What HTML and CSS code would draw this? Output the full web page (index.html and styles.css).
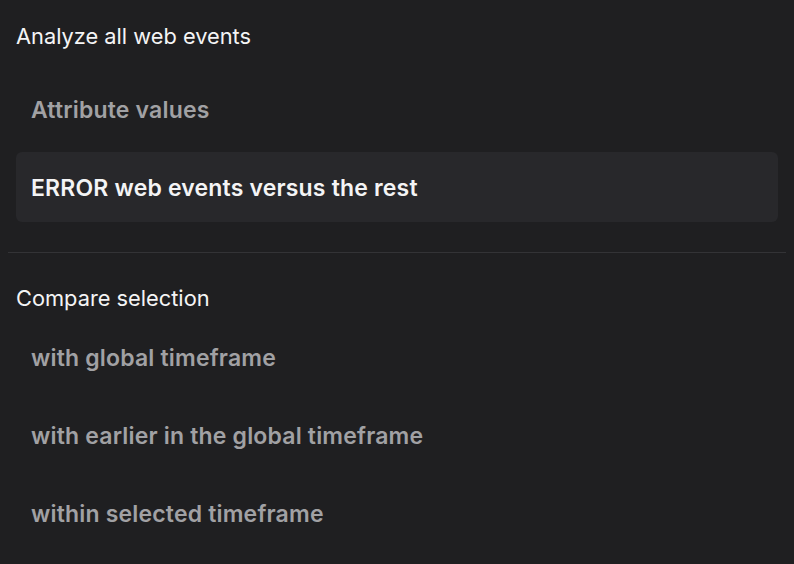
FILE: index.html
```html
<!DOCTYPE html>
<html lang="en">
<head>
<meta charset="UTF-8" />
<meta name="viewport" content="width=device-width, initial-scale=1" />
<title>Analyze menu</title>
<link rel="stylesheet" href="styles.css">
</head>
<body>
  <div class="menu">
    <section class="group group-first">
      <h3 class="group-title">Analyze all web events</h3>
      <ul class="options">
        <li class="option">Attribute values</li>
        <li class="option active">ERROR web events versus the rest</li>
      </ul>
    </section>

    <hr class="divider" />

    <section class="group">
      <h3 class="group-title">Compare selection</h3>
      <ul class="options">
        <li class="option">with global timeframe</li>
        <li class="option">with earlier in the global timeframe</li>
        <li class="option">within selected timeframe</li>
      </ul>
    </section>
  </div>
</body>
</html>
```

FILE: styles.css
```css
* {
  margin: 0;
  padding: 0;
  box-sizing: border-box;
}

body {
  background-color: #1f1f21;
  color: #f4f4f5;
  font-family: Inter, "Noto Sans", sans-serif;
  height: 100vh;
  overflow: hidden;
}

.menu {
  padding: 0 8px;
}

.group {
  padding: 0 8px;
}

.group-first {
  padding-top: 24px;
  padding-bottom: 30px;
}

.group-title {
  font-size: 21.8px;
  font-weight: 400;
  line-height: 24px;
  color: #f4f4f5;
}

.group-first .group-title {
  margin-bottom: 26px;
}

.group:not(.group-first) .group-title {
  margin-top: 33px;
  margin-bottom: 12px;
}

.options {
  list-style: none;
  display: flex;
  flex-direction: column;
  gap: 8px;
}

.option {
  height: 70px;
  display: flex;
  align-items: center;
  padding: 1px 0 0 15px;
  font-size: 23px;
  font-weight: 600;
  letter-spacing: 0.18px;
  color: #a1a1a4;
  border-radius: 6px;
}

.option.active {
  background-color: #28282b;
  color: #f4f4f5;
}

.divider {
  border: none;
  height: 1px;
  background-color: #333336;
}
```
